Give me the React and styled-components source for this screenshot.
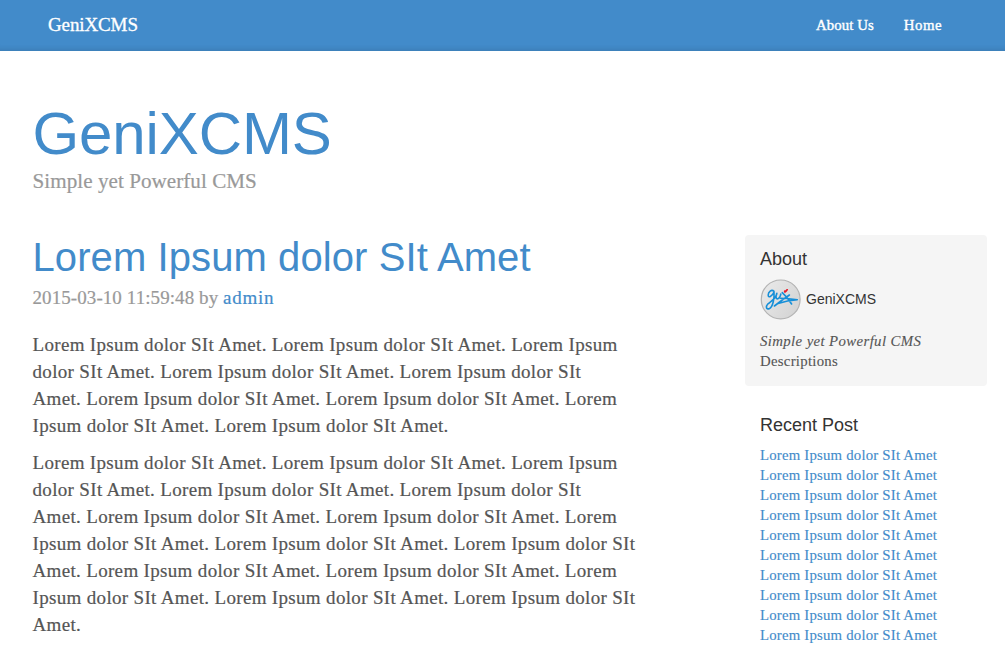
import React from "react";
import styled, { createGlobalStyle } from "styled-components";

const serif = `"Liberation Serif", serif`;
const sans = `"Liberation Sans", Arial, sans-serif`;

const GlobalStyle = createGlobalStyle`
  * { box-sizing: border-box; }
  body {
    margin: 0;
    background: #fff;
    color: #555;
    font-family: ${serif};
    overflow: hidden;
  }
  a { color: #428bca; text-decoration: none; }
`;

const Masthead = styled.header`
  display: flex;
  justify-content: space-between;
  height: 51px;
  padding: 0 63px 0 48px;
  background: #428bca;
  box-shadow: inset 0 -7px 5px -5px rgba(0, 0, 0, 0.1);
`;

const Brand = styled.a`
  && { color: #fff; }
  font-size: 19px;
  line-height: 50px;
  letter-spacing: -0.12px;
  -webkit-text-stroke: 0.3px #fff;
`;

const Nav = styled.nav`
  display: flex;
  gap: 30px;
`;

const NavLink = styled.a`
  && { color: #fff; }
  font-size: 14.8px;
  line-height: 50px;
  letter-spacing: ${(p) => p.$tracking}px;
  -webkit-text-stroke: 0.4px #fff;
`;

const Page = styled.div`
  padding: 0 18px 0 32.5px;
`;

const BlogHeader = styled.div`
  padding-top: 50px;
  height: 184px;
`;

const BlogTitle = styled.h1`
  margin: 0;
  color: #428bca;
  font: 400 60px/65px ${sans};
  letter-spacing: -0.1px;
`;

const Tagline = styled.p`
  margin: 0;
  color: #999;
  font-size: 21.1px;
  line-height: 30px;
  letter-spacing: 0.05px;
  -webkit-text-stroke: 0.2px #999;
`;

const Columns = styled.div`
  display: flex;
  justify-content: space-between;
`;

const Post = styled.article`
  width: 620px;
`;

const PostTitle = styled.h2`
  margin: 0 0 5px;
  color: #428bca;
  font: 400 40px/44px ${sans};
  letter-spacing: 0.09px;
`;

const Meta = styled.p`
  margin: 0 0 20px;
  color: #999;
  font-size: 19px;
  line-height: 27px;
  letter-spacing: 0.08px;
  white-space: nowrap;
  -webkit-text-stroke: 0.2px;
`;

const Author = styled.a`
  letter-spacing: 0.7px;
`;

const Paragraph = styled.p`
  margin: 0 0 10px;
  font-size: 19px;
  line-height: 27px;
  letter-spacing: 0.33px;
  white-space: pre-line;
  -webkit-text-stroke: 0.2px #555;
`;

const Sidebar = styled.aside`
  width: 242px;
  font-size: 14.8px;
  line-height: 20px;
  -webkit-text-stroke: 0.12px;
`;

const Module = styled.section`
  padding: 15px;
  margin-bottom: 15px;
  border-radius: 4px;
  background: ${(p) => (p.$inset ? "#f5f5f5" : "transparent")};
  height: ${(p) => (p.$inset ? "151px" : "auto")};
`;

const ModuleTitle = styled.h4`
  margin: 0 0 10px;
  color: #333;
  font: 400 18px/19px ${sans};
  -webkit-text-stroke: 0;
`;

const Profile = styled.div`
  display: flex;
  align-items: center;
  gap: 5px;
  margin-bottom: 11px;
  color: #333;
  font: 400 14px/20px ${sans};
  -webkit-text-stroke: 0;
`;

const ProfileName = styled.span`
  padding-bottom: 2px;
`;

const Tag = styled.em`
  display: block;
  letter-spacing: 0.38px;
`;

const Description = styled.div`
  letter-spacing: 0.27px;
`;

const PostList = styled.ol`
  list-style: none;
  margin: 0;
  padding: 0;
  letter-spacing: 0.2px;
`;

function Logo() {
  return (
    <svg width="41" height="41" viewBox="0 0 41 41" fill="none">
      <defs>
        <linearGradient id="disc" x1="0" y1="0.2" x2="1" y2="0.8">
          <stop offset="0" stopColor="#e9e9e9" />
          <stop offset="1" stopColor="#d3d3d3" />
        </linearGradient>
      </defs>
      <circle cx="20.7" cy="20.4" r="19.4" fill="url(#disc)" stroke="#b3b3b3" strokeWidth="1.2" />
      <g stroke="#168fd8" strokeWidth="1.6" strokeLinecap="round" strokeLinejoin="round">
        <path d="M14 12.4C11.5 9.8 8.2 13 8.2 16C8.2 19.4 12 17.8 14 13C14.5 19 13 28 9.2 29.7C6.3 30.6 5.4 27.6 7.8 25C10 23 13.5 21 15.2 18.3C16.8 15.5 17 14 16.7 14.4C15.6 17.5 15.8 20.2 17.8 19.8C19.8 19.3 20.4 17 20.8 15" />
        <path d="M22.3 13.6C25 16 28.5 20 31.6 25M29.4 16C25 19 19.5 23 14.4 27M20.6 19.2C26 19.2 32 19.8 37.3 20.7C30.5 21 24 22.4 18 24.6" />
      </g>
      <path d="M23.8 12.5C24 10.9 25.1 11 25.4 11.6C25.8 10.2 27.1 9.7 28.1 10.2C27.8 12.2 26.2 13.3 24.6 13.9Z" fill="#e51c2c" />
    </svg>
  );
}

const paragraphs = [
  `Lorem Ipsum dolor SIt Amet. Lorem Ipsum dolor SIt Amet. Lorem Ipsum
dolor SIt Amet. Lorem Ipsum dolor SIt Amet. Lorem Ipsum dolor SIt
Amet. Lorem Ipsum dolor SIt Amet. Lorem Ipsum dolor SIt Amet. Lorem
Ipsum dolor SIt Amet. Lorem Ipsum dolor SIt Amet.`,
  `Lorem Ipsum dolor SIt Amet. Lorem Ipsum dolor SIt Amet. Lorem Ipsum
dolor SIt Amet. Lorem Ipsum dolor SIt Amet. Lorem Ipsum dolor SIt
Amet. Lorem Ipsum dolor SIt Amet. Lorem Ipsum dolor SIt Amet. Lorem
Ipsum dolor SIt Amet. Lorem Ipsum dolor SIt Amet. Lorem Ipsum dolor SIt
Amet. Lorem Ipsum dolor SIt Amet. Lorem Ipsum dolor SIt Amet. Lorem
Ipsum dolor SIt Amet. Lorem Ipsum dolor SIt Amet. Lorem Ipsum dolor SIt
Amet.`,
];

const recent = Array(10).fill("Lorem Ipsum dolor SIt Amet");

export default function App() {
  return (
    <>
      <GlobalStyle />
      <Masthead>
        <Brand href="#">GeniXCMS</Brand>
        <Nav>
          <NavLink href="#" $tracking={0.1}>About Us</NavLink>
          <NavLink href="#" $tracking={0.5}>Home</NavLink>
        </Nav>
      </Masthead>
      <Page>
        <BlogHeader>
          <BlogTitle>GeniXCMS</BlogTitle>
          <Tagline>Simple yet Powerful CMS</Tagline>
        </BlogHeader>
        <Columns>
          <Post>
            <PostTitle>Lorem Ipsum dolor SIt Amet</PostTitle>
            <Meta>
              2015-03-10 11:59:48 by <Author href="#">admin</Author>
            </Meta>
            {paragraphs.map((text, i) => (
              <Paragraph key={i}>{text}</Paragraph>
            ))}
          </Post>
          <Sidebar>
            <Module $inset>
              <ModuleTitle>About</ModuleTitle>
              <Profile>
                <Logo />
                <ProfileName>GeniXCMS</ProfileName>
              </Profile>
              <Tag>Simple yet Powerful CMS</Tag>
              <Description>Descriptions</Description>
            </Module>
            <Module>
              <ModuleTitle>Recent Post</ModuleTitle>
              <PostList>
                {recent.map((title, i) => (
                  <li key={i}>
                    <a href="#">{title}</a>
                  </li>
                ))}
              </PostList>
            </Module>
          </Sidebar>
        </Columns>
      </Page>
    </>
  );
}
